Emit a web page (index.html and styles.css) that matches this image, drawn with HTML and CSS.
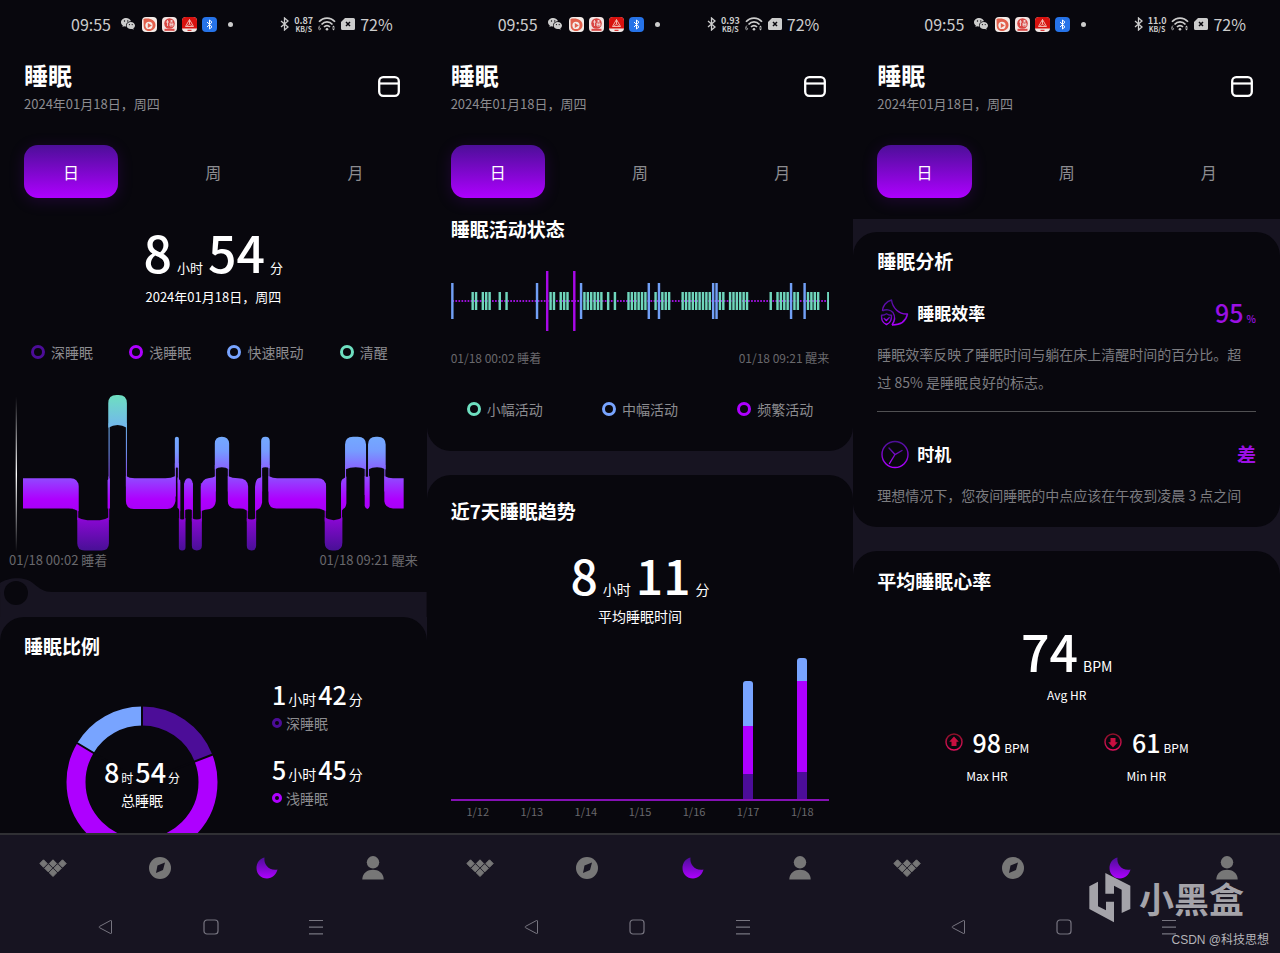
FILE: index.html
```
<!doctype html>
<html lang="zh-CN">
<head>
	<meta charset="utf-8">
	<meta name="viewport" content="width=device-width, initial-scale=1">
	<title>睡眠</title>
	<link rel="stylesheet" href="styles.css">
</head>
<body>
	<!-- shared icons -->
	<svg class="defs" width="0" height="0" aria-hidden="true">
		<defs>
			<linearGradient id="violet" x1="0" y1="0" x2="0" y2="1">
				<stop offset="0" stop-color="#4c0f98"/>
				<stop offset="1" stop-color="#ae00ff"/>
			</linearGradient>
			<linearGradient id="crimson" x1="0" y1="0" x2="0" y2="1">
				<stop offset="0" stop-color="#8c0f28"/>
				<stop offset="1" stop-color="#e0105c"/>
			</linearGradient>
			<symbol id="i-wechat" viewBox="0 0 14 12">
				<path fill="#ccc" d="M5.2 0C2.300 0 0 1.900 0 4.300c0 1.300.7 2.500 1.900 3.300L1.400 9l1.700-.8c.6.2 1.300.3 2 .3C4.500 5.600 6.800 3.300 10 3.300 9.500 1.300 7.500 0 5.200 0z"/>
				<path fill="#ccc" d="M9.800 4C7.400 4 5.600 5.600 5.600 7.600s1.800 3.500 4.200 3.500c.5 0 1-.1 1.500-.2l1.400.8-.4-1.200c1-.7 1.700-1.700 1.700-2.900C14 5.600 12.100 4 9.800 4z"/>
				<g fill="#08070d"><circle cx="3.500" cy="3" r=".7"/><circle cx="6.800" cy="3" r=".7"/><circle cx="8.400" cy="6.600" r=".6"/><circle cx="11.200" cy="6.600" r=".6"/></g>
			</symbol>
			<symbol id="i-play" viewBox="0 0 15 15">
				<rect width="15" height="15" rx="4" fill="#f4ece8"/>
				<path d="M1.500 2C8 .5 13.500 3.500 13.500 8c0 3.500-3 6-6.500 6-3.300 0-5.300-2.200-5.300-5z" fill="#e2604c"/>
				<circle cx="7" cy="8.400" r="3.600" fill="#f4ece8"/>
				<path d="M5.800 6v5l4-2.500z" fill="#e2604c"/>
			</symbol>
			<symbol id="i-bank" viewBox="0 0 15 15">
				<rect width="15" height="15" rx="4" fill="#f3e4e2"/>
				<circle cx="7.500" cy="6.500" r="5.300" fill="#d94744"/>
				<path d="M4 5h3M5.500 3v6M8 4h3M9.500 3v2M8 6h3v3H8zM8 7.500h3" stroke="#f3e4e2" fill="none" stroke-width=".8"/>
				<path d="M2.500 12.800h10" stroke="#d94744" stroke-width="2"/>
			</symbol>
			<symbol id="i-rail" viewBox="0 0 15 15">
				<rect width="15" height="15" rx="4" fill="#f0e6e4"/>
				<path d="M4 0h7a4 4 0 0 1 4 4v7.500H0V4a4 4 0 0 1 4-4z" fill="#d8120f"/>
				<path d="M7.500 2.500 3.500 9.500h8zM5 9.500C5.500 7 9.500 7 10 9.500M7.500 2.500V7" stroke="#f2b4ac" fill="none"/>
				<path d="M5.500 13.300h4" stroke="#d8120f"/>
			</symbol>
			<symbol id="i-btapp" viewBox="0 0 15 15">
				<rect width="15" height="15" rx="4" fill="#2673e8"/>
				<path d="M5 5l5 4.800L7.500 12V3L10 5.200 5 10" stroke="#fff" fill="none"/>
			</symbol>
			<symbol id="i-bt" viewBox="0 0 9 14">
				<path d="M1 4l7 6-3.500 3V1L8 4l-7 6" stroke="#ccc" fill="none" stroke-width="1.300"/>
			</symbol>
			<symbol id="i-wifi" viewBox="0 0 18 14">
				<g fill="none" stroke="#ccc" stroke-width="1.700"><path d="M1 4.800C5.500-.2 12.500-.2 17 4.800"/><path d="M3.500 7.500c3.200-3.500 7.800-3.500 11 0"/><path d="M6 10c1.800-1.900 4.200-1.900 6 0"/></g>
				<circle cx="9" cy="12.300" r="1.300" fill="#ccc"/>
				<path d="M14 10.500l1.500-2 1.500 2zM14 11.500l1.500 2 1.500-2z" fill="#ccc"/>
				<path d="M2 8.500C.5 9.500.3 12.800 1.600 12.800S3 10.600 1.300 10.800" fill="none" stroke="#ccc" stroke-width=".8"/>
			</symbol>
			<symbol id="i-sim" viewBox="0 0 14 12">
				<path d="M4 0h8.500A1.500 1.500 0 0 1 14 1.500v9a1.500 1.500 0 0 1-1.500 1.500h-11A1.500 1.500 0 0 1 0 10.500V4z" fill="#ccc"/>
				<path d="M5 4l4 4M9 4L5 8" stroke="#08070d" stroke-width="1.500"/>
			</symbol>
			<symbol id="i-calendar" viewBox="0 0 22 22">
				<rect x="1.200" y="1.200" width="19.600" height="18.600" rx="4" fill="none" stroke="#fff" stroke-width="2.300"/>
				<path d="M1 7.500h20" stroke="#fff" stroke-width="2.200"/>
			</symbol>
			<symbol id="i-home" viewBox="0 0 28 18">
				<g fill="#777"><path id="tile" d="M4.500.8 8.200 4.500 4.500 8.200.8 4.500z" stroke="#777" stroke-linejoin="round"/><use href="#tile" x="9.500"/><use href="#tile" x="19"/><use href="#tile" x="4.800" y="4.700"/><use href="#tile" x="14.200" y="4.700"/><use href="#tile" x="9.500" y="9.300"/></g>
			</symbol>
			<symbol id="i-compass" viewBox="0 0 22 22">
				<circle cx="11" cy="11" r="11" fill="#777"/>
				<path d="M16 5.500l-2 7.500-7 3 1.500-7.500z" fill="#171421"/>
			</symbol>
			<symbol id="i-moon" viewBox="0 0 22 22">
				<path d="M8.500.5C7.500 7 12.500 14 21.500 12.500 20 18 16 21.500 11 21.500 5 21.500.5 17 .5 11 .5 6 3.500 1.800 8.500.5z" fill="url(#violet)"/>
			</symbol>
			<symbol id="i-user" viewBox="0 0 22 24">
				<circle cx="11" cy="6.300" r="6.200" fill="#777"/>
				<path d="M.3 23.500C.3 10.500 21.700 10.500 21.700 23.500z" fill="#777"/>
			</symbol>
			<symbol id="i-back" viewBox="0 0 16 16">
				<path d="M13.500 2v12c0 .6-.5.8-1 .5L1.500 8.700c-.5-.3-.5-1 0-1.300L12.500 1.500c.5-.3 1-.1 1 .5z" fill="none" stroke="#777580"/>
			</symbol>
			<symbol id="i-square" viewBox="0 0 16 16">
				<rect x="1" y="1" width="14" height="14" rx="3" fill="none" stroke="#777580" stroke-width="1.200"/>
			</symbol>
			<symbol id="i-menu" viewBox="0 0 16 16">
				<path d="M1 1.500h14M1 8.200h14M1 14.800h14" stroke="#777580" stroke-width="1.200"/>
			</symbol>
		</defs>
	</svg>

	<main class="board">

		<!-- day overview -->
		<section class="phone">
			<div class="status">
				<span class="time">09:55</span>
				<svg class="s-wechat"><use href="#i-wechat"/></svg>
				<svg class="s-app"><use href="#i-play"/></svg>
				<svg class="s-app"><use href="#i-bank"/></svg>
				<svg class="s-app"><use href="#i-rail"/></svg>
				<svg class="s-app"><use href="#i-btapp"/></svg>
				<i class="s-dot"></i>
				<svg class="s-bt"><use href="#i-bt"/></svg>
				<span class="rate">0.87<small>KB/S</small></span>
				<svg class="s-wifi"><use href="#i-wifi"/></svg>
				<svg class="s-sim"><use href="#i-sim"/></svg>
				<span class="battery">72%</span>
			</div>
			<header class="head">
				<div>
					<h1>睡眠</h1>
					<p class="date">2024年01月18日，周四</p>
				</div>
				<button type="button" class="cal" aria-label="日历"><svg><use href="#i-calendar"/></svg></button>
			</header>
			<div class="tabs">
				<button type="button" class="tab active">日</button>
				<button type="button" class="tab">周</button>
				<button type="button" class="tab">月</button>
			</div>
			<div class="scroll">
				<article class="card stages">
					<p class="hero"><b>8</b><span>小时</span><b>54</b><span>分</span></p>
					<p class="hero-date">2024年01月18日，周四</p>
					<ul class="legend">
						<li><i class="ring deep"></i>深睡眠</li>
						<li><i class="ring light"></i>浅睡眠</li>
						<li><i class="ring rem"></i>快速眼动</li>
						<li><i class="ring awake"></i>清醒</li>
					</ul>
					<svg class="stage-chart" viewBox="0 30 1281 486">
						<defs>
							<linearGradient id="stage" gradientUnits="userSpaceOnUse" x1="0" y1="45" x2="0" y2="512">
								<stop offset="0" stop-color="#6edfc0"/>
								<stop offset=".29" stop-color="#74a6ff"/>
								<stop offset=".36" stop-color="#769cff"/>
								<stop offset=".55" stop-color="#9440ff"/>
								<stop offset=".67" stop-color="#ae00ff"/>
								<stop offset=".74" stop-color="#a800f6"/>
								<stop offset=".82" stop-color="#8208cc"/>
								<stop offset="1" stop-color="#481096"/>
							</linearGradient>
							<linearGradient id="cursor" gradientUnits="userSpaceOnUse" x1="0" y1="50" x2="0" y2="516">
								<stop offset="0" stop-color="#fff" stop-opacity="0"/>
								<stop offset=".5" stop-color="#fff"/>
								<stop offset="1" stop-color="#fff" stop-opacity="0"/>
							</linearGradient>
						</defs>
						<rect x="47" y="50" width="4" height="466" fill="url(#cursor)"/>
						<g fill="url(#stage)">
							<!-- awake -->
							<path d="M325 143V70q0-25 25-25h6q25 0 25 25v73q-14-8-28-8t-28 8z"/>
							<!-- rem -->
							<path d="M525 266v-90q0-6 6-6t6 6v90q-6-6-12 0z"/>
							<path d="M645 269v-78q0-21 21-21t22 21v78q-10-7-22-7t-21 7z"/>
							<path d="M784 266v-83q0-13 13-13t13 13v83q-6-4-13-4t-13 4z"/>
							<path d="M1036 269v-75q0-24 24-24h14q25 0 25 24v75q-14-7-31-7t-32 7z"/>
							<path d="M1105 269v-75q0-24 24-24h5q24 0 24 24v75q-12-7-26-7t-27 7z"/>
							<!-- light -->
							<path d="M69 295H212q22 0 24 24v75q-12-8-30-8H69z"/>
							<path d="M323 300l7-6v92h-7z"/>
							<path d="M378 288q10 7 26 7h92q18 0 31-7v75q-4 24-25 24H402q-24 0-24-24z"/>
							<path d="M533 292q8 6 8 14v88l-8-12z"/>
							<path d="M553 392v-80q2-17 13-17t13 17v80q-12-8-26 0z"/>
							<path d="M603 394v-74q4-23 22-25 15-1 23-7v75q-2 20-18 24-16 1-27 7z"/>
							<path d="M684 288q13 7 31 7 29 0 30 25v74q-10-8-24-8h-16q-21-2-21-22z"/>
							<path d="M766 394v-76q2-20 10-23 8-1 11-7v80q-4 17-10 19z"/>
							<path d="M806 288q14 7 26 7h123q22 0 24 24v75q-14-8-29-8H830q-22 0-24-22z"/>
							<path d="M1024 394v-84q1-12 8-14l8-6v80q-2 14-8 16z"/>
							<path d="M1095 288q7 5 15 0v90q-2 9-7 9t-8-9z"/>
							<path d="M1154 288q12 7 26 7h32v91h-32q-24-2-26-22z"/>
							<!-- deep -->
							<path d="M232 412q16 9 30 9h38q12 0 27-9v78q0 22-22 22h-51q-22 0-22-22z"/>
							<path d="M537 414q10 10 20 0v88q0 10-10 10t-10-10z"/>
							<path d="M576 414q15 10 30 0v84q0 14-15 14t-15-14z"/>
							<path d="M741 414q14 10 28 0v84q0 14-14 14t-14-14z"/>
							<path d="M975 412q12 9 27 9t26-9v76q0 24-22 24h-8q-23 0-23-24z"/>
							<!-- connectors -->
							<path d="M232 310h3v110h-3zM325 290h3v130h-3zM326 130h3v250h-3zM378 130h3v190h-3zM525 250h3v100h-3zM534 250h3v60h-3zM538 300h3v130h-3zM553 310h3v115h-3zM576 310h3v115h-3zM603 310h3v115h-3zM645 255h3v80h-3zM684 255h3v80h-3zM741 320h3v105h-3zM766 320h3v105h-3zM784 255h3v80h-3zM806 255h3v80h-3zM975 310h3v115h-3zM1024 310h3v115h-3zM1036 255h3v80h-3zM1095 255h3v90h-3zM1105 255h3v90h-3zM1154 255h3v80h-3z"/>
						</g>
					</svg>
					<p class="span"><span>01/18 00:02 睡着</span><span>01/18 09:21 醒来</span></p>
				</article>
				<svg class="wave" viewBox="0 0 427 49">
					<path d="M0 15C7 10 24 7 34 16c6 5 10 8 18 8h375v25H0z" fill="#171421"/>
					<circle cx="16" cy="25" r="12" fill="#08070d"/>
				</svg>
				<article class="card ratio">
					<h2>睡眠比例</h2>
					<div class="ratio-body">
						<div class="donut">
							<svg viewBox="0 0 152 152">
								<g fill="none" stroke-width="19" transform="rotate(-90 76 76)">
									<circle cx="76" cy="76" r="66" pathLength="534" stroke="#4c0d98" stroke-dasharray="102 432"/>
									<circle cx="76" cy="76" r="66" pathLength="534" stroke="#ae00ff" stroke-dasharray="345 189" stroke-dashoffset="-102"/>
									<circle cx="76" cy="76" r="66" pathLength="534" stroke="#78a4ff" stroke-dasharray="87 447" stroke-dashoffset="-447"/>
								</g>
								<path d="M76 76V0M76 76l72-28M76 76L11 37" stroke="#08070d" stroke-width="2"/>
							</svg>
							<div class="donut-label">
								<p class="total"><b>8</b><span>时</span><b>54</b><span>分</span></p>
								<p>总睡眠</p>
							</div>
						</div>
						<dl class="parts">
							<div>
								<dd><b>1</b><span>小时</span><b>42</b><span>分</span></dd>
								<dt><i class="ring small deep"></i>深睡眠</dt>
							</div>
							<div>
								<dd><b>5</b><span>小时</span><b>45</b><span>分</span></dd>
								<dt><i class="ring small light"></i>浅睡眠</dt>
							</div>
						</dl>
					</div>
				</article>
			</div>
			<footer class="dock">
				<nav class="nav">
					<button type="button" aria-label="首页"><svg class="n-home"><use href="#i-home"/></svg></button>
					<button type="button" aria-label="发现"><svg class="n-icon"><use href="#i-compass"/></svg></button>
					<button type="button" aria-label="睡眠"><svg class="n-icon"><use href="#i-moon"/></svg></button>
					<button type="button" aria-label="我的"><svg class="n-icon"><use href="#i-user"/></svg></button>
				</nav>
				<div class="keys">
					<button type="button" aria-label="返回"><svg><use href="#i-back"/></svg></button>
					<button type="button" aria-label="主屏幕"><svg><use href="#i-square"/></svg></button>
					<button type="button" aria-label="菜单"><svg><use href="#i-menu"/></svg></button>
				</div>
			</footer>
		</section>

		<!-- activity and trend -->
		<section class="phone scrolled">
			<div class="status">
				<span class="time">09:55</span>
				<svg class="s-wechat"><use href="#i-wechat"/></svg>
				<svg class="s-app"><use href="#i-play"/></svg>
				<svg class="s-app"><use href="#i-bank"/></svg>
				<svg class="s-app"><use href="#i-rail"/></svg>
				<svg class="s-app"><use href="#i-btapp"/></svg>
				<i class="s-dot"></i>
				<svg class="s-bt"><use href="#i-bt"/></svg>
				<span class="rate">0.93<small>KB/S</small></span>
				<svg class="s-wifi"><use href="#i-wifi"/></svg>
				<svg class="s-sim"><use href="#i-sim"/></svg>
				<span class="battery">72%</span>
			</div>
			<header class="head">
				<div>
					<h1>睡眠</h1>
					<p class="date">2024年01月18日，周四</p>
				</div>
				<button type="button" class="cal" aria-label="日历"><svg><use href="#i-calendar"/></svg></button>
			</header>
			<div class="tabs">
				<button type="button" class="tab active">日</button>
				<button type="button" class="tab">周</button>
				<button type="button" class="tab">月</button>
			</div>
			<div class="scroll">
				<article class="card activity">
					<h2>睡眠活动状态</h2>
					<!-- one x unit per five minutes -->
					<svg class="activity-chart" viewBox="-0.4 0 111.8 60" preserveAspectRatio="none">
						<path d="M0 30H111" stroke="#9a10d8" stroke-width="2" stroke-dasharray=".5 .4"/>
						<g fill="none" stroke-width=".72">
							<path stroke="#6fd6bc" d="M6 21v18M7 21v18M9 21v18M10 21v18M11 21v18M14 21v18M16 21v18M29 21v18M30 21v18M32 21v18M33 21v18M34 21v18M39 21v18M40 21v18M41 21v18M42 21v18M43 21v18M44 21v18M46 21v18M48 21v18M52 21v18M53 21v18M54 21v18M55 21v18M56 21v18M57 21v18M60 21v18M62 21v18M63 21v18M64 21v18M68 21v18M69 21v18M70 21v18M71 21v18M72 21v18M73 21v18M74 21v18M75 21v18M76 21v18M79 21v18M80 21v18M82 21v18M83 21v18M84 21v18M85 21v18M86 21v18M87 21v18M94 21v18M96 21v18M97 21v18M98 21v18M99 21v18M101 21v18M102 21v18M105 21v18M106 21v18M107 21v18M108 21v18M111 21v18"/>
							<path stroke="#719ff5" d="M0 12v36M25 12v36M38 12v36M58 12v36M61 12v36M77 12v36M78 12v36M100 12v36M104 12v36"/>
							<path stroke="#a808e8" d="M28 0v60M36 0v60"/>
						</g>
					</svg>
					<p class="span"><span>01/18 00:02 睡着</span><span>01/18 09:21 醒来</span></p>
					<ul class="legend">
						<li><i class="ring awake"></i>小幅活动</li>
						<li><i class="ring rem"></i>中幅活动</li>
						<li><i class="ring light"></i>频繁活动</li>
					</ul>
				</article>
				<article class="card trend">
					<h2>近7天睡眠趋势</h2>
					<p class="hero"><b>8</b><span>小时</span><b>11</b><span>分</span></p>
					<p class="hero-note">平均睡眠时间</p>
					<div class="bars">
						<div></div>
						<div></div>
						<div></div>
						<div></div>
						<div></div>
						<div class="bar">
							<i class="rem" style="height:45px"></i>
							<i class="light" style="height:48px"></i>
							<i class="deep" style="height:25px"></i>
						</div>
						<div class="bar">
							<i class="rem" style="height:23px"></i>
							<i class="light" style="height:91px"></i>
							<i class="deep" style="height:27px"></i>
						</div>
					</div>
					<div class="days"><span>1/12</span><span>1/13</span><span>1/14</span><span>1/15</span><span>1/16</span><span>1/17</span><span>1/18</span></div>
				</article>
			</div>
			<footer class="dock">
				<nav class="nav">
					<button type="button" aria-label="首页"><svg class="n-home"><use href="#i-home"/></svg></button>
					<button type="button" aria-label="发现"><svg class="n-icon"><use href="#i-compass"/></svg></button>
					<button type="button" aria-label="睡眠"><svg class="n-icon"><use href="#i-moon"/></svg></button>
					<button type="button" aria-label="我的"><svg class="n-icon"><use href="#i-user"/></svg></button>
				</nav>
				<div class="keys">
					<button type="button" aria-label="返回"><svg><use href="#i-back"/></svg></button>
					<button type="button" aria-label="主屏幕"><svg><use href="#i-square"/></svg></button>
					<button type="button" aria-label="菜单"><svg><use href="#i-menu"/></svg></button>
				</div>
			</footer>
		</section>

		<!-- analysis and heart rate -->
		<section class="phone">
			<div class="status">
				<span class="time">09:55</span>
				<svg class="s-wechat"><use href="#i-wechat"/></svg>
				<svg class="s-app"><use href="#i-play"/></svg>
				<svg class="s-app"><use href="#i-bank"/></svg>
				<svg class="s-app"><use href="#i-rail"/></svg>
				<svg class="s-app"><use href="#i-btapp"/></svg>
				<i class="s-dot"></i>
				<svg class="s-bt"><use href="#i-bt"/></svg>
				<span class="rate">11.0<small>KB/S</small></span>
				<svg class="s-wifi"><use href="#i-wifi"/></svg>
				<svg class="s-sim"><use href="#i-sim"/></svg>
				<span class="battery">72%</span>
			</div>
			<header class="head">
				<div>
					<h1>睡眠</h1>
					<p class="date">2024年01月18日，周四</p>
				</div>
				<button type="button" class="cal" aria-label="日历"><svg><use href="#i-calendar"/></svg></button>
			</header>
			<div class="tabs">
				<button type="button" class="tab active">日</button>
				<button type="button" class="tab">周</button>
				<button type="button" class="tab">月</button>
			</div>
			<div class="scroll">
				<article class="card analysis">
					<h2>睡眠分析</h2>
					<section class="item">
						<div class="item-head">
							<svg viewBox="0 0 30 30" fill="none" stroke="url(#violet)" stroke-width="1.400" stroke-linejoin="round">
								<path d="M3.500 13C3.500 8 7 3.500 12.500 2c1 8 7.500 14.500 16 14-1.500 7-7 11-15.500 11"/>
								<path d="M3.500 13c3-2 8-1.500 10.500 1.500 2.500 4 1.500 9-1 12.500"/>
								<path d="M7.500 15.800c1.800 1.300 3.200 1.400 5 1.400 0 4.500-.5 7.300-5 9.300-4.500-2-5-4.800-5-9.300 1.800 0 3.200-.1 5-1.400z"/>
								<path d="M4.800 20l2.500 2.400 3.500-3.400"/>
							</svg>
							<h3>睡眠效率</h3>
							<p class="score">95<small>%</small></p>
						</div>
						<p class="text">睡眠效率反映了睡眠时间与躺在床上清醒时间的百分比。超过 85% 是睡眠良好的标志。</p>
					</section>
					<section class="item">
						<div class="item-head">
							<svg viewBox="0 0 30 30" fill="none" stroke="url(#violet)" stroke-width="1.400" stroke-linecap="round">
								<circle cx="16" cy="15.500" r="13"/>
								<path d="M10 9l6 6.500 7-4M16 15.500l-5.500 9"/>
							</svg>
							<h3>时机</h3>
							<p class="grade">差</p>
						</div>
						<p class="text">理想情况下，您夜间睡眠的中点应该在午夜到凌晨 3 点之间</p>
					</section>
				</article>
				<article class="card heart">
					<h2>平均睡眠心率</h2>
					<p class="hero"><b>74</b><span>BPM</span></p>
					<p class="hero-note">Avg HR</p>
					<div class="range">
						<div>
							<p class="rate-value">
								<svg viewBox="0 0 18 18"><circle cx="9" cy="9" r="8" fill="none" stroke="url(#crimson)" stroke-width="1.500"/><path d="M9 3.500l4.800 5.200h-2.300V13h-5V8.700H4.200z" fill="#c80f40"/></svg>
								<b>98</b><span>BPM</span>
							</p>
							<p>Max HR</p>
						</div>
						<div>
							<p class="rate-value">
								<svg viewBox="0 0 18 18"><circle cx="9" cy="9" r="8" fill="none" stroke="url(#crimson)" stroke-width="1.500"/><path d="M9 14.500l4.800-5.200h-2.300V5h-5v4.300H4.200z" fill="#c80f40"/></svg>
								<b>61</b><span>BPM</span>
							</p>
							<p>Min HR</p>
						</div>
					</div>
				</article>
			</div>
			<footer class="dock">
				<nav class="nav">
					<button type="button" aria-label="首页"><svg class="n-home"><use href="#i-home"/></svg></button>
					<button type="button" aria-label="发现"><svg class="n-icon"><use href="#i-compass"/></svg></button>
					<button type="button" aria-label="睡眠"><svg class="n-icon"><use href="#i-moon"/></svg></button>
					<button type="button" aria-label="我的"><svg class="n-icon"><use href="#i-user"/></svg></button>
				</nav>
				<div class="keys">
					<button type="button" aria-label="返回"><svg><use href="#i-back"/></svg></button>
					<button type="button" aria-label="主屏幕"><svg><use href="#i-square"/></svg></button>
					<button type="button" aria-label="菜单"><svg><use href="#i-menu"/></svg></button>
				</div>
			</footer>
		</section>

		<div class="brand">
			<svg viewBox="0 0 124 150">
				<path d="M0 40l26-14v74l24 12V86h24v62L0 108z"/>
				<path d="M48 0l75 38v70l-26 12V50L74 38v24H48z"/>
			</svg>
			<span>小黑盒</span>
		</div>
		<p class="credit">CSDN @科技思想</p>
	</main>
</body>
</html>
```

FILE: styles.css
```
* {
	box-sizing: border-box;
}

body {
	margin: 0;
	background: #171421;
	color: #fff;
	font: 14px/20px 'Noto Sans CJK SC', 'Noto Sans', sans-serif;
}

h1, h2, h3, p, ul, dl, dd {
	margin: 0;
	padding: 0;
}

ul {
	list-style: none;
}

svg {
	display: block;
	flex: none;
}

b {
	font-weight: 500;
}

button {
	display: flex;
	align-items: center;
	justify-content: center;
	padding: 0;
	border: 0;
	background: none;
	color: inherit;
	font: inherit;
	cursor: pointer;
}

.defs {
	position: absolute;
}

.board {
	position: relative;
	display: grid;
	grid-template-columns: repeat(3, 1fr);
	height: 100vh;
}

.phone {
	display: flex;
	flex-direction: column;
	min-width: 0;
	min-height: 0;
	background: #08070d;
}

/* status bar */
.status {
	display: flex;
	align-items: center;
	flex: none;
	gap: 5px;
	height: 48px;
	padding: 0 34px 0 71px;
	color: #ccc;
}

.time, .battery {
	font-size: 16px;
}

.time {
	margin-right: 5px;
}

.s-wechat {
	width: 14px;
	height: 12px;
	margin-right: 2px;
}

.s-app {
	width: 15px;
	height: 15px;
}

.s-dot {
	width: 5px;
	height: 5px;
	margin: 0 auto 0 6px;
	border-radius: 50%;
	background: #ccc;
}

.s-bt {
	width: 9px;
	height: 14px;
}

.rate {
	font-size: 9px;
	line-height: 9px;
	font-weight: 700;
	text-align: center;
}

.rate small {
	display: block;
	font-size: 7px;
	line-height: 8px;
}

.s-wifi {
	width: 18px;
	height: 14px;
}

.s-sim {
	width: 14px;
	height: 12px;
}

/* title and tabs */
.head {
	display: flex;
	align-items: center;
	justify-content: space-between;
	flex: none;
	padding: 11px 27px 0 24px;
}

h1 {
	font-size: 24px;
	line-height: 32px;
	font-weight: 700;
}

.date {
	margin-top: 3px;
	color: #8c8c90;
	font-size: 13px;
}

.cal svg {
	width: 22px;
	height: 22px;
}

.tabs {
	display: grid;
	grid-template-columns: repeat(3, 1fr);
	flex: none;
	padding: 31px 0 21px;
}

.scrolled .tabs {
	padding-bottom: 17px;
}

.tab {
	height: 53px;
	margin: 0 24px;
	border-radius: 14px;
	color: #8c8c90;
	font-size: 16px;
}

.tab.active {
	background: linear-gradient(#4c0f98, #ae00ff);
	box-shadow: 0 3px 16px rgba(120, 0, 200, .2);
	color: #fff;
}

/* cards */
.scroll {
	flex: 1;
	min-height: 0;
	overflow: hidden;
	background: #171421;
}

.card {
	padding: 15px 24px 80px;
	border-radius: 24px;
	background: #08070d;
}

h2 {
	font-size: 19px;
	line-height: 28px;
	font-weight: 700;
}

.hero {
	display: flex;
	align-items: baseline;
	justify-content: center;
	gap: 5px;
	font-size: 13px;
}

.hero b {
	font-size: 50px;
	line-height: 60px;
}

.hero-date, .hero-note {
	text-align: center;
}

.legend {
	display: flex;
	justify-content: space-between;
	color: #8c8c90;
}

.legend li {
	display: flex;
	align-items: center;
	gap: 6px;
}

.ring {
	width: 14px;
	height: 14px;
	border: 3px solid;
	border-radius: 50%;
}

.ring.small {
	width: 10px;
	height: 10px;
}

.ring.deep { color: #4c0d98; }
.ring.light { color: #ae00ff; }
.ring.rem { color: #78a4ff; }
.ring.awake { color: #6edfc0; }

.span {
	display: flex;
	justify-content: space-between;
	color: #68686c;
	font-size: 13px;
	line-height: 16px;
}

/* sleep stages */
.stages {
	padding: 2px 0 0;
	border-radius: 0;
}

.hero-date {
	margin-top: 6px;
	font-size: 13px;
}

.stages .legend {
	margin-top: 35px;
	padding: 0 39px 0 31px;
}

.stage-chart {
	width: 100%;
	margin-top: 28px;
}

.stages .span {
	padding: 0 9px;
}

.wave {
	width: 100%;
	background: #08070d;
}

/* ratio */
.ratio-body {
	display: flex;
	gap: 54px;
	padding: 18px 0 0 42px;
}

.donut {
	display: grid;
	margin-top: 28px;
}

.donut > * {
	grid-area: 1 / 1;
}

.donut svg {
	width: 152px;
}

.donut-label {
	align-self: center;
	z-index: 1;
	text-align: center;
}

.total {
	display: flex;
	align-items: baseline;
	justify-content: center;
	gap: 2px;
	font-size: 12px;
}

.total b {
	font-size: 27px;
	line-height: 36px;
}

.parts {
	display: flex;
	flex-direction: column;
	gap: 20px;
}

.parts dd {
	display: flex;
	align-items: baseline;
	gap: 2px;
}

.parts b {
	font-size: 25px;
	line-height: 32px;
}

.parts dt {
	display: flex;
	align-items: center;
	gap: 4px;
	margin-top: 3px;
	color: #8c8c90;
}

/* activity */
.activity {
	padding-top: 0;
	padding-bottom: 32px;
	border-radius: 0 0 24px 24px;
}

.activity-chart {
	width: 100%;
	height: 60px;
	margin-top: 28px;
}

.activity .span {
	margin-top: 19px;
	font-size: 12px;
}

.activity .legend {
	margin-top: 33px;
	padding: 0 16px;
}

/* trend */
.trend {
	margin-top: 24px;
	padding-top: 22px;
}

.trend .hero {
	margin-top: 19px;
	font-size: 14px;
}

.trend .hero b {
	font-size: 48px;
}

.trend .hero-note {
	margin-top: 2px;
}

.bars, .days {
	display: grid;
	grid-template-columns: repeat(7, 1fr);
}

.bars {
	align-items: end;
	margin-top: 32px;
	border-bottom: 2px solid #8410b4;
}

.bar {
	justify-self: center;
	width: 10px;
	overflow: hidden;
	border-radius: 3px 3px 0 0;
}

.bar i {
	display: block;
}

.bar .rem { background: #78a4ff; }
.bar .light { background: #ae00ff; }
.bar .deep { background: #4c0d98; }

.days {
	color: #68686c;
	font-size: 11px;
	text-align: center;
}

/* analysis */
.analysis {
	margin-top: 13px;
	padding-bottom: 18px;
}

.item {
	padding: 19px 0 15px;
}

.item + .item {
	border-top: 1px solid #505052;
	padding-top: 23px;
	padding-bottom: 0;
}

.item-head {
	display: flex;
	align-items: center;
	gap: 8px;
	height: 38px;
}

.item-head svg {
	width: 30px;
	height: 30px;
	margin-left: 2px;
}

h3 {
	flex: 1;
	font-size: 17px;
	font-weight: 700;
}

.score {
	padding-top: 4px;
	color: #9c10e4;
	font-size: 25px;
	font-weight: 500;
}

.score small {
	margin-left: 3px;
	font-size: 10px;
}

.grade {
	color: #9c10e4;
	font-size: 19px;
	font-weight: 700;
}

.text {
	padding: 8px 8px 0 0;
	color: #7c7c80;
	line-height: 28px;
}

/* heart rate */
.heart {
	margin-top: 24px;
	padding-top: 16px;
}

.heart .hero {
	margin-top: 25px;
	font-size: 14px;
}

.heart .hero-note {
	margin-top: 5px;
	font-size: 12px;
}

.range {
	display: grid;
	grid-template-columns: 1fr 1fr;
	margin-top: 19px;
	padding: 0 30px;
	font-size: 12px;
	text-align: center;
}

.rate-value {
	display: flex;
	align-items: baseline;
	justify-content: center;
	gap: 3px;
	margin-bottom: 6px;
}

.rate-value svg {
	align-self: center;
	width: 18px;
	height: 18px;
	margin-right: 7px;
}

.rate-value b {
	font-size: 25px;
	line-height: 36px;
}

/* bottom bars */
.dock {
	flex: none;
	border-top: 2px solid #303034;
	background: #171421;
}

.nav {
	display: grid;
	grid-template-columns: repeat(4, 1fr);
	height: 66px;
}

.n-icon {
	width: 22px;
	height: 24px;
}

.n-home {
	width: 28px;
	height: 18px;
}

.keys {
	display: grid;
	grid-template-columns: repeat(3, 1fr);
	height: 52px;
	padding: 0 58px 0 53px;
}

.keys svg {
	width: 16px;
	height: 16px;
}

/* floating marks */
.brand {
	position: absolute;
	right: 36px;
	bottom: 30px;
	display: flex;
	align-items: center;
	gap: 8px;
	color: #b4b3b8;
	font-size: 35px;
	line-height: 50px;
	font-weight: 700;
	opacity: .9;
	pointer-events: none;
}

.brand svg {
	width: 42px;
	height: 50px;
	fill: currentColor;
}

.credit {
	position: absolute;
	right: 11px;
	bottom: 4px;
	color: #b4b3b8;
	font: 12px/18px 'Liberation Sans', 'Noto Sans CJK SC', sans-serif;
	pointer-events: none;
}
```
